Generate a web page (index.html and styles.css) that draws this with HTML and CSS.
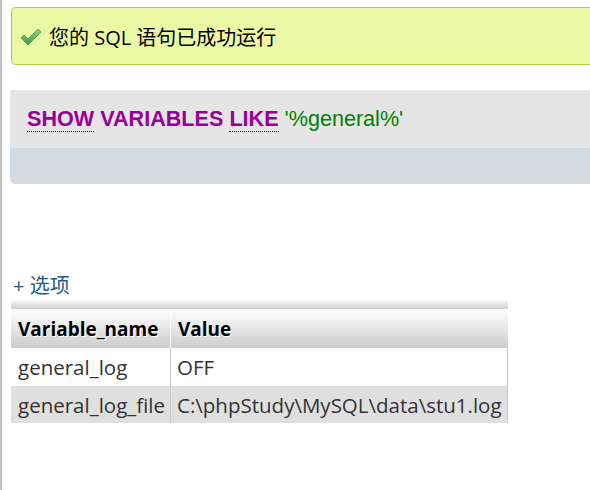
FILE: index.html
```html
<!DOCTYPE html>
<html lang="zh">
<head>
<meta charset="utf-8">
<link rel="stylesheet" href="styles.css">
</head>
<body>
<div class="page">
  <div class="success">
    <svg class="check" width="22" height="20" viewBox="0 0 22 20">
      <defs>
        <linearGradient id="g" x1="0" y1="0" x2="0" y2="1">
          <stop offset="0" stop-color="#8fd18f"/>
          <stop offset="1" stop-color="#3f9a3f"/>
        </linearGradient>
      </defs>
      <path d="M1 11 L4 8 L8 12 L18 2 L21 5 L8 18 Z" fill="url(#g)" stroke="#4a9d4a" stroke-width="0.8" stroke-linejoin="round"/>
    </svg>
    <span class="msg">您的 SQL 语句已成功运行</span>
  </div>

  <div class="sqlbox">
    <div class="sqlcode"><span class="kw dot">SHOW</span> <span class="kw">VARIABLES</span> <span class="kw dot">LIKE</span> <span class="str">'%general%'</span></div>
    <div class="sqlfoot"></div>
  </div>

  <div class="options">+&nbsp;选项</div>

  <div class="band"></div>
  <table class="results">
    <thead>
      <tr><th class="c1">Variable_name</th><th class="c2">Value</th></tr>
    </thead>
    <tbody>
      <tr class="odd"><td>general_log</td><td>OFF</td></tr>
      <tr class="even"><td>general_log_file</td><td>C:\phpStudy\MySQL\data\stu1.log</td></tr>
    </tbody>
  </table>
</div>
</body>
</html>
```

FILE: styles.css
```css
html, body {
  margin: 0;
  padding: 0;
  background: #fff;
}
body {
  height: 490px;
  overflow: hidden;
  border-left: 2px solid #c4c4c4;
  box-sizing: border-box;
  font-family: "Open Sans", "Noto Sans CJK SC", sans-serif;
}
.page {
  padding: 7px 0 0 8px;
}
.success {
  display: flex;
  align-items: center;
  height: 56px;
  margin-left: 1px;
  border: 1px solid #a6d24e;
  border-right: none;
  border-radius: 5px 0 0 5px;
  background: #ebf8a4;
  padding-left: 8px;
}
.check {
  margin-right: 7px;
  margin-top: 1px;
}
.msg {
  font-size: 20px;
  color: #000;
  font-family: "Open Sans", "Noto Sans CJK SC", sans-serif;
}
.sqlbox {
  margin-top: 25px;
  border-radius: 0 0 0 5px;
  overflow: hidden;
}
.sqlcode {
  height: 58px;
  background: #e5e5e5;
  box-sizing: border-box;
  padding: 16px 0 0 17px;
  font-family: "Liberation Sans", Arial, sans-serif;
  font-size: 21.6px;
}
.kw {
  color: #990099;
  font-weight: bold;
}
.dot {
  border-bottom: 1px dotted #000;
}
.str {
  color: #008000;
}
.sqlfoot {
  height: 36px;
  background: #d3dae1;
}
.options {
  margin-top: 89px;
  margin-left: 3px;
  font-size: 20px;
  color: #235a81;
  line-height: 26px;
}
.band {
  width: 497px;
  margin-left: 1px;
  height: 10px;
  background: linear-gradient(#ffffff, #cfcfcf);
}
.results {
  margin-left: 1px;
  border-collapse: collapse;
  width: 497px;
  font-size: 20.5px;
  color: #333;
}
.results th {
  height: 39px;
  padding: 0 0 0 7px;
  text-align: left;
  font-weight: bold;
  font-size: 19px;
  color: #000;
  background: linear-gradient(#ffffff, #cccccc);
  text-shadow: 1px 1px 0 #fff;
}
.results th.c1 {
  width: 152px;
  border-right: 1px solid #fff;
}
.results td {
  padding: 0 0 0 6px;
  height: 37px;
  border-right: 1px solid #c8c8c8;
  white-space: nowrap;
}
.results td:first-child {
  padding-left: 7px;
}
.results tr.odd td {
  background: #fff;
  height: 38px;
}
.results tr.even td {
  background: #dfdfdf;
}
```
